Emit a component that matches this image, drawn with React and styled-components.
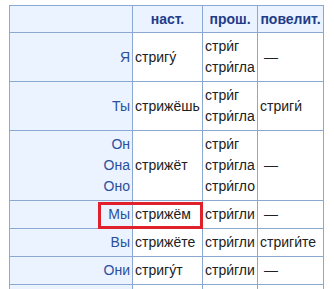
import React from "react";
import styled, { createGlobalStyle } from "styled-components";

const GlobalStyle = createGlobalStyle`
  body {
    margin: 0;
    background: #ffffff;
    font-family: "Liberation Sans", Arial, sans-serif;
  }
`;

const Page = styled.div`
  padding: 5px 0 0 9px;
  height: 289px;
  overflow: hidden;
  box-sizing: border-box;
`;

const Table = styled.table`
  border-collapse: collapse;
  font-size: 14px;
  color: #202122;
  table-layout: fixed;
  width: 314px;
`;

const HeadCell = styled.th`
  background: #eaf3ff;
  border: 1px solid #8aa8d0;
  color: #1f3c88;
  font-weight: bold;
  text-align: center;
  height: 26px;
  padding: 0 2px;
  line-height: 20px;
  white-space: nowrap;
`;

const Pronoun = styled.td`
  background: #eaf3ff;
  border: 1px solid #8aa8d0;
  color: #2b4f9b;
  text-align: right;
  padding: 3px 2px;
  line-height: 21px;
`;

const Cell = styled.td`
  border: 1px solid #8aa8d0;
  padding: 3px 2px;
  line-height: 21px;
  white-space: nowrap;
  position: relative;
`;

const Mark = styled.span`
  position: absolute;
  left: -35px;
  top: 1px;
  right: -1px;
  bottom: -1px;
  border: 3px solid #e0202a;
  pointer-events: none;
`;

const rows = [
  { who: ["Я"], now: "стригу́", past: ["стри́г", "стри́гла"], imp: "\u00a0—" },
  { who: ["Ты"], now: "стрижёшь", past: ["стри́г", "стри́гла"], imp: "стриги́" },
  {
    who: ["Он", "Она", "Оно"],
    now: "стрижёт",
    past: ["стри́г", "стри́гла", "стри́гло"],
    imp: "\u00a0—",
  },
  { who: ["Мы"], now: "стрижём", past: ["стри́гли"], imp: "\u00a0—", marked: true },
  { who: ["Вы"], now: "стрижёте", past: ["стри́гли"], imp: "стриги́те" },
  { who: ["Они"], now: "стригу́т", past: ["стри́гли"], imp: "\u00a0—" },
];

function Lines({ items }) {
  return items.map((t, i) => (
    <React.Fragment key={i}>
      {i > 0 && <br />}
      {t}
    </React.Fragment>
  ));
}

export default function App() {
  return (
    <Page>
      <GlobalStyle />
      <Table>
        <colgroup>
          <col style={{ width: 123 }} />
          <col style={{ width: 70 }} />
          <col style={{ width: 55 }} />
          <col style={{ width: 66 }} />
        </colgroup>
        <thead>
          <tr>
            <HeadCell></HeadCell>
            <HeadCell>наст.</HeadCell>
            <HeadCell>прош.</HeadCell>
            <HeadCell>повелит.</HeadCell>
          </tr>
        </thead>
        <tbody>
          {rows.map((r, i) => (
            <tr key={i}>
              <Pronoun>
                <Lines items={r.who} />
              </Pronoun>
              <Cell>
                {r.now}
                {r.marked && <Mark />}
              </Cell>
              <Cell>
                <Lines items={r.past} />
              </Cell>
              <Cell>{r.imp}</Cell>
            </tr>
          ))}
          <tr>
            <Pronoun>&nbsp;</Pronoun>
            <Cell>&nbsp;</Cell>
            <Cell>&nbsp;</Cell>
            <Cell>&nbsp;</Cell>
          </tr>
        </tbody>
      </Table>
    </Page>
  );
}
